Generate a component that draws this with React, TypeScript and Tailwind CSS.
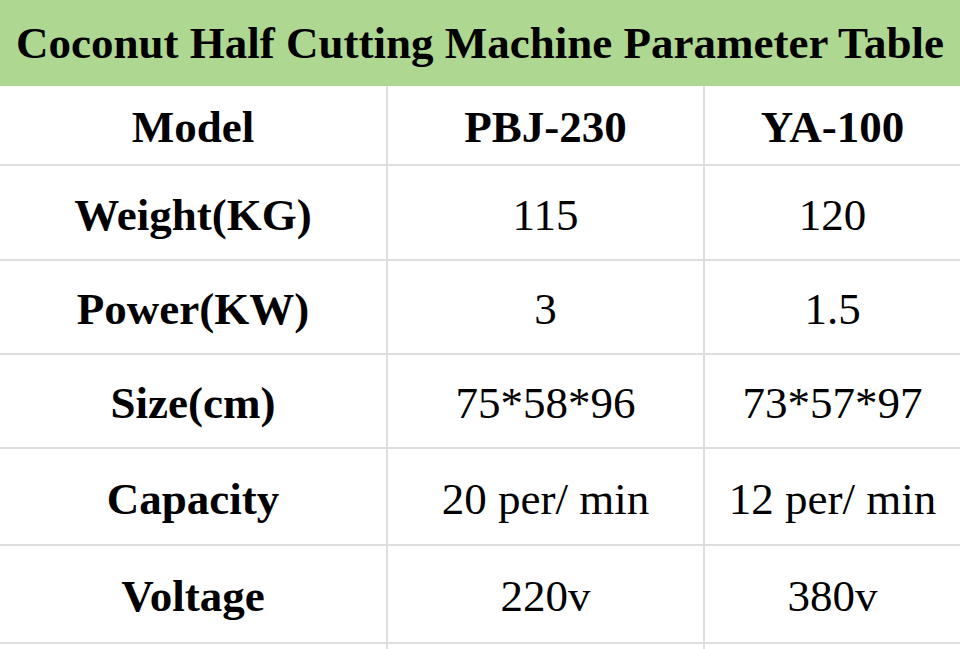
const rows: { label: string; a: string; b: string; h: string; bold?: boolean }[] = [
  { label: "Model", a: "PBJ-230", b: "YA-100", h: "h-[80px]", bold: true },
  { label: "Weight(KG)", a: "115", b: "120", h: "h-[95px]" },
  { label: "Power(KW)", a: "3", b: "1.5", h: "h-[94px]" },
  { label: "Size(cm)", a: "75*58*96", b: "73*57*97", h: "h-[94px]" },
  { label: "Capacity", a: "20 per/ min", b: "12 per/ min", h: "h-[97px]" },
  { label: "Voltage", a: "220v", b: "380v", h: "h-[98px]" },
];

export default function App() {
  return (
    <div className="w-[960px] h-[649px] overflow-hidden bg-white text-black font-['Liberation_Serif',serif] text-[45px] leading-none">
      {/* Title */}
      <div className="h-[86px] bg-[#aed891] flex items-center justify-center font-bold whitespace-nowrap">
        Coconut Half Cutting Machine Parameter Table
      </div>

      {/* Rows */}
      {rows.map((r) => (
        <div key={r.label} className={`flex ${r.h} border-b-2 border-[#dedede]`}>
          <div className="w-[388px] shrink-0 border-r-2 border-[#dedede] pt-[5px] flex items-center justify-center font-bold">
            {r.label}
          </div>
          <div
            className={`w-[317px] shrink-0 border-r-2 border-[#dedede] pt-[5px] flex items-center justify-center ${r.bold ? "font-bold" : ""}`}
          >
            {r.a}
          </div>
          <div className={`flex-1 pt-[5px] flex items-center justify-center ${r.bold ? "font-bold" : ""}`}>
            {r.b}
          </div>
        </div>
      ))}

      {/* column lines continuing past the last row */}
      <div className="flex h-[5px]">
        <div className="w-[388px] shrink-0 border-r-2 border-[#dedede]" />
        <div className="w-[317px] shrink-0 border-r-2 border-[#dedede]" />
        <div className="flex-1" />
      </div>
    </div>
  );
}
